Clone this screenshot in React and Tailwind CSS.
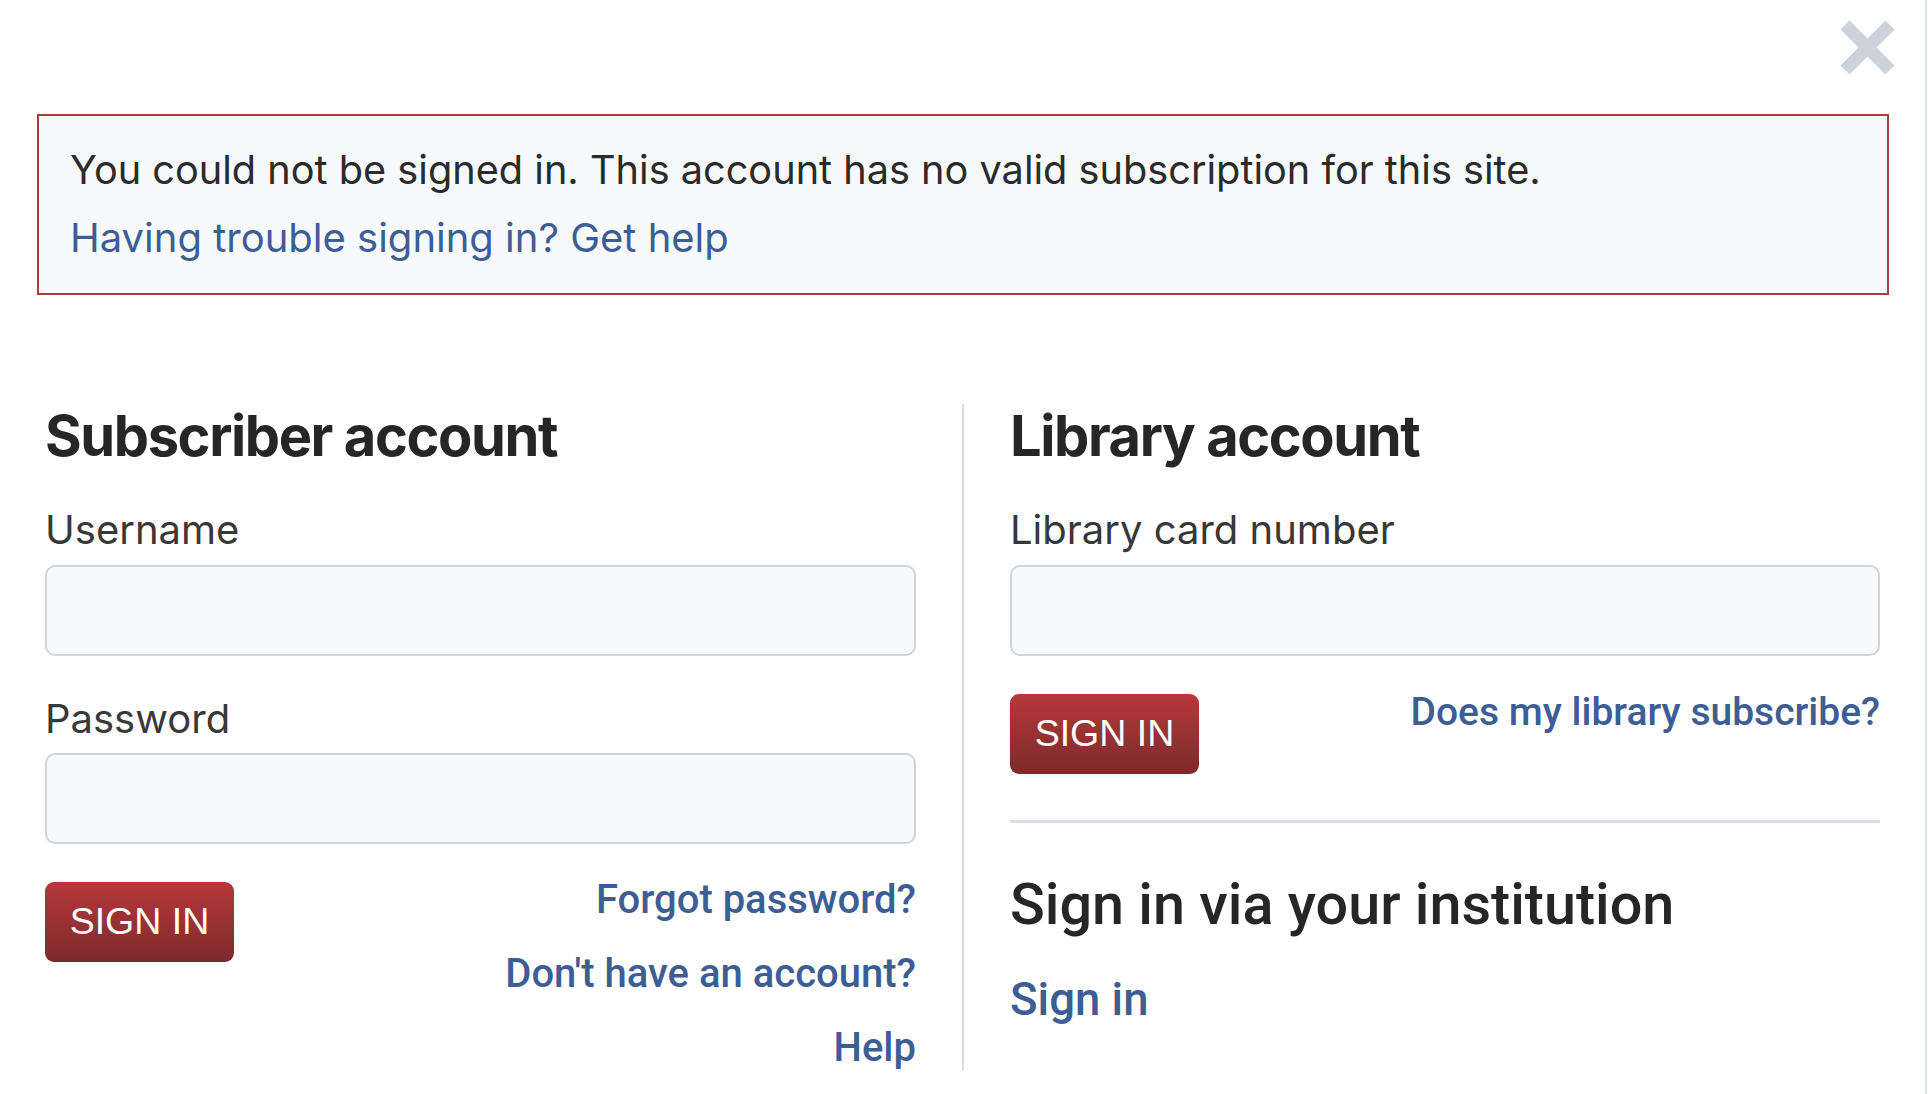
import React from "react";

function Input() {
  return (
    <div className="h-[91px] w-full rounded-[10px] border-2 border-[#cfd4df] bg-[#f8f9fb]" />
  );
}

function SignInButton() {
  return (
    <div
      className="flex h-[80px] w-[189px] items-center justify-center rounded-[9px] bg-gradient-to-b from-[#b8383a] to-[#7c2a2c] text-[37.5px] leading-none text-white"
      style={{ fontFamily: '"Liberation Sans", Arial, sans-serif' }}
    >
      SIGN IN
    </div>
  );
}

const inter = { fontFamily: "Inter, 'Noto Sans', sans-serif" };
const roboto = { fontFamily: "Roboto, 'Liberation Sans', sans-serif" };

export default function App() {
  return (
    <div className="relative h-[1094px] w-[1927px] border-r-2 border-[#dfe2ea] bg-white" style={inter}>
      {/* close */}
      <div className="absolute left-[1840px] top-[20px] h-[55px] w-[55px]">
        <svg viewBox="0 0 55 55" width="55" height="55">
          <line x1="5" y1="5" x2="50" y2="50" stroke="#cdd2dd" strokeWidth="13" />
          <line x1="50" y1="5" x2="5" y2="50" stroke="#cdd2dd" strokeWidth="13" />
        </svg>
      </div>

      <div className="pt-[114px] pl-[37px]">
        <div className="w-[1852px] border-2 border-[#a83e40] bg-[#f8f9fb] px-[31px] pt-[21px] pb-[22px]">
          <p className="text-[39.7px] leading-[67px] text-[#2b2b2b]">
            You could not be signed in. This account has no valid subscription for this site.
          </p>
          <p className="text-[40px] leading-[67px] text-[#3d5e95]">Having trouble signing in? Get help</p>
        </div>
      </div>

      <div className="mt-[106px] flex pl-[45px]">
        {/* left column */}
        <div className="w-[871px]">
          <h2 className="mt-[7px] text-[56px] font-bold leading-none tracking-[-0.025em] text-[#262626]">
            Subscriber account
          </h2>
          <div className="mt-[46px] text-[40px] leading-none text-[#383838]">Username</div>
          <div className="mt-[15px]">
            <Input />
          </div>
          <div className="mt-[43px] text-[40px] leading-none text-[#383838]">Password</div>
          <div className="mt-[14px]">
            <Input />
          </div>
          <div className="mt-[17px] flex items-start justify-between">
            <div className="mt-[21px]">
              <SignInButton />
            </div>
            <div className="mt-[2px] flex flex-col items-end text-[40px] font-medium leading-[74px] text-[#3d5e95]" style={roboto}>
              <span>Forgot password?</span>
              <span>Don't have an account?</span>
              <span>Help</span>
            </div>
          </div>
        </div>

        {/* divider */}
        <div className="ml-[46px] mt-[3px] h-[667px] w-[2px] bg-[#d9dde6]" />

        {/* right column */}
        <div className="ml-[46px] w-[870px]">
          <h2 className="mt-[7px] text-[56px] font-bold leading-none tracking-[-0.025em] text-[#262626]">
            Library account
          </h2>
          <div className="mt-[46px] text-[40px] leading-none text-[#383838]">Library card number</div>
          <div className="mt-[15px]">
            <Input />
          </div>
          <div className="mt-[38px] flex items-start justify-between">
            <SignInButton />
            <span className="-mt-[1px] text-[39px] font-medium leading-none text-[#3d5e95]" style={roboto}>
              Does my library subscribe?
            </span>
          </div>
          <div className="mt-[46px] h-[3px] w-full bg-[#d9dde6]" />
          <h2 className="mt-[53px] text-[57.5px] font-medium leading-none text-[#262626]" style={roboto}>
            Sign in via your institution
          </h2>
          <div className="mt-[43px] text-[45.5px] font-medium leading-none text-[#3d5e95]" style={roboto}>
            Sign in
          </div>
        </div>
      </div>
    </div>
  );
}
